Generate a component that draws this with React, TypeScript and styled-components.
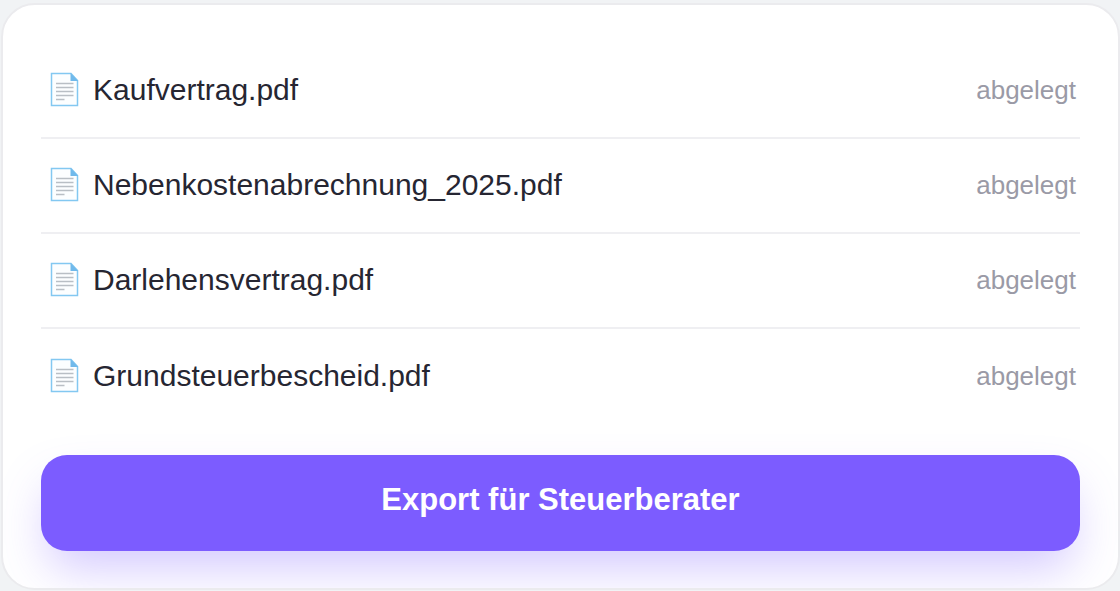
import React from "react";
import styled, { createGlobalStyle } from "styled-components";

const GlobalStyle = createGlobalStyle`
  *, *::before, *::after { box-sizing: border-box; }
  body {
    margin: 0;
    background: #f1f3f5;
    font-family: "Liberation Sans", Arial, sans-serif;
  }
`;

const Page = styled.main`
  padding: 3px 0 0 1px;
`;

const Card = styled.section`
  overflow: hidden;
  padding: 39px 38px 37px;
  border: 2px solid #ebebee;
  border-radius: 34px;
  background: #ffffff;
`;

const FileList = styled.ul`
  margin: 0 0 31px;
  padding: 0;
  list-style: none;
`;

const FileRow = styled.li`
  display: flex;
  align-items: center;
  justify-content: space-between;
  height: 95px;
  padding: 0 4px 2px 8px;
  border-bottom: 2px solid #efeff2;

  &:last-child {
    border-bottom: 0;
  }
`;

const FileName = styled.span`
  display: flex;
  align-items: center;
  gap: 13px;
  color: #262632;
  font-size: 30px;
  line-height: 36px;
`;

const FileState = styled.span`
  color: #9a9aa6;
  font-size: 26px;
  line-height: 34px;
`;

const Icon = styled.svg`
  display: block;
  flex: none;
`;

const ExportButton = styled.button`
  display: block;
  width: 100%;
  padding: 27px 24px 33px;
  border: 0;
  border-radius: 26px;
  background: #7c5cff;
  box-shadow: 0 24px 48px -8px rgba(124, 92, 255, 0.34);
  color: #ffffff;
  font: bold 31px/36px "Liberation Sans", Arial, sans-serif;
  cursor: pointer;
`;

function PageIcon() {
  return (
    <Icon width="31" height="36" viewBox="0 0 31 36" aria-hidden="true">
      <path d="M2.5 1.5H22L28.5 8.5V33.5H2.5Z" fill="#fcfeff" stroke="#83c8f1" strokeWidth="1.5" />
      <path d="M21.5 1L29.2 9H21.5Z" fill="#70b9eb" />
      <path d="M7 11.5H24.5M7 15.5H24.5M7 19.5H24.5M7 23.5H24.5M7 27.5H15.5" stroke="#b9bfc5" strokeWidth="1.4" />
    </Icon>
  );
}

const files = [
  "Kaufvertrag.pdf",
  "Nebenkostenabrechnung_2025.pdf",
  "Darlehensvertrag.pdf",
  "Grundsteuerbescheid.pdf",
];

export default function App() {
  return (
    <Page>
      <GlobalStyle />
      <Card>
        <FileList>
          {files.map((file) => (
            <FileRow key={file}>
              <FileName>
                <PageIcon />
                {file}
              </FileName>
              <FileState>abgelegt</FileState>
            </FileRow>
          ))}
        </FileList>
        <ExportButton type="button">Export für Steuerberater</ExportButton>
      </Card>
    </Page>
  );
}
